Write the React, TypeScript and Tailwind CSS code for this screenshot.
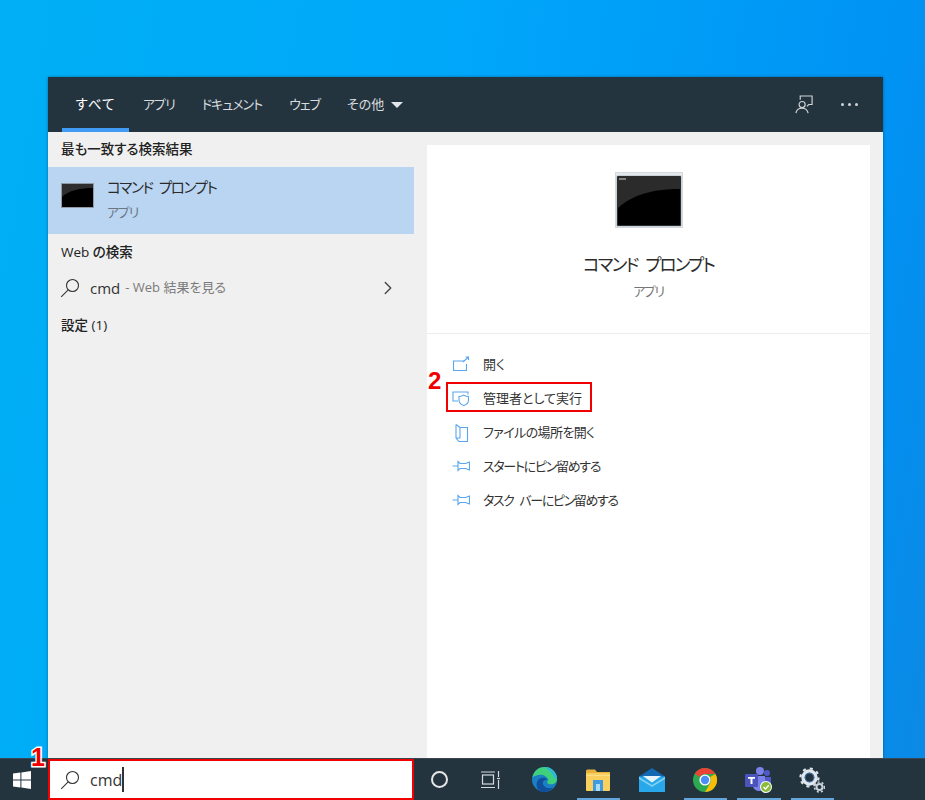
import { ChevronRight } from "lucide-react";

const cjk = "font-['Open_Sans','Noto_Sans_CJK_JP',sans-serif] [font-feature-settings:'palt']";

function SearchIcon({ className }: { className?: string }) {
  return (
    <svg viewBox="0 0 20 20" className={className} fill="none" stroke="currentColor" strokeWidth="1.1">
      <circle cx="12.5" cy="7.5" r="6" />
      <path d="M8.2 11.8 L1.2 18.8" />
    </svg>
  );
}

function CmdIcon({ big }: { big?: boolean }) {
  if (big) {
    return (
      <svg viewBox="0 0 68 56" className="w-[68px] h-[56px]">
        <rect x="0.5" y="0.5" width="67" height="55" fill="#e6e9ec" stroke="#d5d8dc" />
        <rect x="2" y="4" width="64" height="50" fill="#000" stroke="#8a9aa8" strokeWidth="0.6" />
        <path d="M3 4.5 H65 V17 C40 17 18 22 3 36 Z" fill="#2b2b2b" />
        <path d="M4 7 H11" stroke="#bbb" strokeWidth="1.2" />
      </svg>
    );
  }
  return (
    <svg viewBox="0 0 33 25" className="w-[33px] h-[25px]">
      <rect x="0" y="0" width="33" height="25" fill="#8f9aa5" />
      <rect x="1" y="1" width="31" height="23" fill="#000" />
      <path d="M1 1 H32 V5 C20 5 8 7 1 14 Z" fill="#2e2e2e" />
    </svg>
  );
}

function ActionIcon({ kind }: { kind: string }) {
  const common = { fill: "none", stroke: "#5aa6ee", strokeWidth: 1.1 };
  return (
    <svg viewBox="0 0 18 18" className="w-[18px] h-[18px] shrink-0" {...common}>
      {kind === "open" && (
        <>
          <path d="M12 5 H1.5 V14.5 H14.5 V8" />
          <path d="M11 6 L16.5 1 M13.5 1 H16.5 V4" />
        </>
      )}
      {kind === "admin" && (
        <>
          <path d="M6 11 H1 V2 H16 V4.5" />
          <path d="M7 6.5 C9.5 6.5 10.5 5.5 11.5 5 C12.5 5.5 14 6.5 16.5 6.5 V10 C16.5 13 14 14.8 11.8 15.5 C9.5 14.8 7 13 7 10 Z" />
        </>
      )}
      {kind === "folder" && (
        <path d="M4 0.5 V14 L7 17.5 H15.5 V3.5 H8 V14 H4 M4 0.5 L8 3.5" />
      )}
      {kind === "pin" && (
        <path d="M0.5 8 H6 M6 3.5 L8 5.5 H13.5 L17.5 4 V12 L13.5 10.5 H8 L6 12.5 Z" />
      )}
    </svg>
  );
}

function StartLogo() {
  return (
    <svg viewBox="0 0 18 18" className="w-[18px] h-[18px]" fill="#fff">
      <path d="M0 2.6 L7.4 1.6 V8.4 H0 Z" />
      <path d="M8.4 1.4 L18 0 V8.4 H8.4 Z" />
      <path d="M0 9.6 H7.4 V16.4 L0 15.4 Z" />
      <path d="M8.4 9.6 H18 V18 L8.4 16.6 Z" />
    </svg>
  );
}

function TaskView() {
  return (
    <svg viewBox="0 0 20 18" className="w-[20px] h-[18px]" fill="none" stroke="#d6d9dc" strokeWidth="1.2">
      <rect x="1.5" y="4" width="11" height="9" />
      <path d="M0 1 H14 M0 16.5 H14 M17.5 0 V6 M17.5 9 V18" />
      <path d="M16 7.5 H19" />
    </svg>
  );
}

function EdgeIcon() {
  return (
    <svg viewBox="0 0 28 28" className="w-[27px] h-[27px]">
      <circle cx="14" cy="14" r="13" fill="#1a7fc4" />
      <path d="M1.5 12 C3 4 9 1 14 1 C21 1 27 6 27 14 C27 17 24 19 21 19 C17 19 15.5 16.5 18 14.5 C16 9 8 7 1.5 12 Z" fill="#3fd07c" />
      <path d="M14 1 C21 1 27 6 27 14 L24 12 C22 7 18 4 14 1 Z" fill="#2fb7d8" />
      <path d="M12 27 C7 26 4 20 7 15 C9 12 14 11 17 14 C13 14 11 17 13 20 C15 23 19 24 23 22 C20 26 16 27.5 12 27 Z" fill="#0f4f9c" />
    </svg>
  );
}

function FolderIcon() {
  return (
    <svg viewBox="0 0 24 22" className="w-[24px] h-[22px]">
      <path d="M0 2 C0 1 1 0.5 2 0.5 H9 L11 3 H24 V6 H0 Z" fill="#e8b23a" />
      <rect x="0" y="4" width="24" height="18" rx="1" fill="#f9cf5e" />
      <path d="M0 6 H24 V7 H0 Z" fill="#fbe08c" />
      <path d="M7 11 H17 V22 H14 V15 H10 V22 H7 Z" fill="#3f9be0" />
      <rect x="10" y="15" width="4" height="7" fill="#a9dcf7" />
    </svg>
  );
}

function MailIcon() {
  return (
    <svg viewBox="0 0 26 24" className="w-[26px] h-[24px]">
      <path d="M13 0 L26 8.5 V10 H0 V8.5 Z" fill="#1268b3" />
      <rect x="0" y="8.5" width="26" height="15.5" fill="#28a8ea" />
      <path d="M4 8 H22 L13 14.5 Z" fill="#e8f4fb" />
      <path d="M0 9 L13 17 L26 9 V11 L13 19 L0 11 Z" fill="#7fd0f5" />
    </svg>
  );
}

function ChromeIcon() {
  return (
    <svg viewBox="0 0 24 24" className="w-[24px] h-[24px]">
      <circle cx="12" cy="12" r="12" fill="#2da94f" />
      <path d="M12 0 A12 12 0 0 1 22.4 6 H12 A6 6 0 0 0 6.8 9 L1.8 5.7 A12 12 0 0 1 12 0 Z" fill="#ea4335" />
      <path d="M22.4 6 A12 12 0 0 1 12 24 L17.2 15 A6 6 0 0 0 17.2 9 Z" fill="#fbbc05" />
      <circle cx="12" cy="12" r="5.6" fill="#fff" />
      <circle cx="12" cy="12" r="4.2" fill="#4d8df5" />
    </svg>
  );
}

function TeamsIcon() {
  return (
    <svg viewBox="0 0 28 28" className="w-[28px] h-[28px]">
      <circle cx="15" cy="5" r="4" fill="#7b83eb" />
      <circle cx="22" cy="7" r="3" fill="#5059c9" />
      <path d="M17 11 H26 V18 C26 21 23 22 21 22 H17 Z" fill="#5059c9" />
      <path d="M8 10 H20 V20 C20 24 16 25 14 25 C11 25 9 23 8 21 Z" fill="#7b83eb" />
      <rect x="0" y="8" width="13" height="13" rx="1" fill="#4b53bc" />
      <path d="M3 11 H10 V12.8 H7.5 V18 H5.5 V12.8 H3 Z" fill="#fff" />
      <circle cx="21" cy="21" r="6" fill="#fff" />
      <circle cx="21" cy="21" r="5" fill="#8dbb3c" />
      <path d="M18.5 21 L20.5 23 L23.8 19.3" fill="none" stroke="#fff" strokeWidth="1.3" />
    </svg>
  );
}

function GearsIcon() {
  return (
    <svg viewBox="0 0 26 26" className="w-[26px] h-[26px]" fill="none">
      <circle cx="10.5" cy="10.5" r="6.5" stroke="#dfe6ec" strokeWidth="3.4" />
      <circle cx="10.5" cy="10.5" r="9" stroke="#dfe6ec" strokeWidth="2.2" strokeDasharray="3 4.07" />
      <circle cx="10.5" cy="10.5" r="4.4" stroke="#3e78b8" strokeWidth="1" />
      <circle cx="20.5" cy="20" r="3" stroke="#c9d2da" strokeWidth="2" />
      <circle cx="20.5" cy="20" r="5" stroke="#c9d2da" strokeWidth="1.6" strokeDasharray="2 2.2" />
    </svg>
  );
}

function TaskButton({ children, active }: { children: React.ReactNode; active?: boolean }) {
  return (
    <div className="relative w-[53.5px] h-full flex items-center justify-center">
      {children}
      {active && <div className="absolute bottom-0 left-[5px] right-[5px] h-[2px] bg-[#62a6dc]" />}
    </div>
  );
}

const tabs = ["アプリ", "ドキュメント", "ウェブ"];

const actions = [
  { kind: "open", label: "開く", tracking: "" },
  { kind: "admin", label: "管理者として実行", tracking: "", boxed: true },
  { kind: "folder", label: "ファイルの場所を開く", tracking: "tracking-[-0.6px]" },
  { kind: "pin", label: "スタートにピン留めする", tracking: "tracking-[-1.3px]" },
  { kind: "pin", label: "タスク バーにピン留めする", tracking: "tracking-[-1.4px] [word-spacing:4px]" },
];

export default function App() {
  return (
    <div className={`relative w-[925px] h-[800px] overflow-hidden flex flex-col ${cjk} bg-[linear-gradient(100deg,#00aff5_0%,#00a8fa_42%,#0093f4_85%,#0c88e4_100%)]`}>
      <div className="flex-1 min-h-0 pt-[77px] pl-[48px]">
        <div className="w-[835px] h-full flex flex-col shadow-[0_0_3px_rgba(0,0,0,0.35)]">
          <header className="h-[55px] shrink-0 bg-[#24343f] flex items-stretch text-[13px] text-[#e3e6e8] pl-[14px] pr-[25px]">
            <div className="relative w-[67px] flex items-center justify-center text-white text-[13.5px] tracking-[1px]">
              すべて
              <div className="absolute bottom-0 inset-x-0 h-[4px] bg-[#3f9bf4]" />
            </div>
            <div className="flex items-center gap-[27px] pl-[14px] text-[#d8dcdf]">
              {tabs.map((t) => (
                <span key={t} className="tracking-[-1px]">{t}</span>
              ))}
              <span className="flex items-center gap-[7px]">
                その他
                <span className="w-0 h-0 border-x-[6px] border-x-transparent border-t-[6px] border-t-[#e3e6e8]" />
              </span>
            </div>
            <div className="ml-auto flex items-center gap-[27px]">
              <svg viewBox="0 0 20 20" className="w-[19px] h-[19px]" fill="none" stroke="#d0d4d8" strokeWidth="1.2">
                <path d="M5.5 5 V1 H18 V10 H14.5 L12.5 12" />
                <circle cx="7.5" cy="10" r="3.2" />
                <path d="M1 19 C1.5 15.5 4 14 7.5 14 C11 14 13 15.5 13.8 19" />
              </svg>
              <div className="flex gap-[4px]">
                <span className="w-[3px] h-[3px] rounded-full bg-[#d0d4d8]" />
                <span className="w-[3px] h-[3px] rounded-full bg-[#d0d4d8]" />
                <span className="w-[3px] h-[3px] rounded-full bg-[#d0d4d8]" />
              </div>
            </div>
          </header>

          <div className="flex-1 min-h-0 flex">
            <aside className="w-[366px] shrink-0 bg-[#f0f0f0] text-[#1d1d1d]">
              <div className="h-[35px] pl-[13px] flex items-center text-[13.5px] font-medium text-[#222]">最も一致する検索結果</div>
              <div className="h-[67px] bg-[#b9d5f2] pl-[13px] flex items-start gap-[13px]">
                <div className="mt-[16px]">
                  <CmdIcon />
                </div>
                <div className="mt-[9px]">
                  <div className="text-[14.5px] tracking-[-1.4px] [word-spacing:4px] leading-[24px] text-[#2a2a2a]">コマンド プロンプト</div>
                  <div className="text-[13px] tracking-[-1.2px] leading-[24px] text-[#6c7680]">アプリ</div>
                </div>
              </div>
              <div className="h-[36px] pl-[13px] flex items-center text-[13.5px] font-medium text-[#222]">Web の検索</div>
              <div className="h-[36px] pl-[12px] pr-[15px] flex items-center text-[13px]">
                <SearchIcon className="w-[20px] h-[20px] text-[#333]" />
                <span className="ml-[10px] text-[15px] text-[#333]">cmd</span>
                <span className="ml-[5px] text-[#7a7a7a]">- Web 結果を見る</span>
                <ChevronRight className="ml-auto w-[22px] h-[22px] text-[#444]" strokeWidth={1.5} />
              </div>
              <div className="h-[38px] pl-[13px] flex items-center text-[13.5px] font-medium text-[#222]">設定 (1)</div>
            </aside>

            <main className="flex-1 bg-[#f0f0f0] pt-[13px] pl-[13px] pr-[13px]">
              <div className="h-full bg-white">
                <div className="h-[189px] flex flex-col items-center border-b border-[#ececec] pt-[27px]">
                  <CmdIcon big />
                  <div className="mt-[23px] text-[17.5px] tracking-[-1.8px] [word-spacing:5px] leading-[26px] text-[#2b2b2b]">コマンド プロンプト</div>
                  <div className="mt-[4px] text-[13px] tracking-[-1.3px] leading-[20px] text-[#757575]">アプリ</div>
                </div>
                <ul className="pt-[14px] pl-[25px]">
                  {actions.map((a) => (
                    <li key={a.label} className={`relative h-[34px] flex items-center gap-[13px] text-[13px] text-[#333] ${a.tracking}`}>
                      <ActionIcon kind={a.kind} />
                      <span>{a.label}</span>
                      {a.boxed && (
                        <div className="absolute left-[-6px] top-0 w-[146px] h-[30px] border-2 border-[#f00000]" />
                      )}
                    </li>
                  ))}
                </ul>
              </div>
            </main>
          </div>
        </div>
      </div>

      <footer className="h-[42px] shrink-0 bg-[#24343f] flex items-stretch border-t border-[#3a4650]">
        <div className="w-[48px] pr-[4px] flex items-center justify-center">
          <StartLogo />
        </div>
        <div className="w-[366px] bg-white border-2 border-[#f00000] flex items-center pl-[10px] text-[#333]">
          <SearchIcon className="w-[20px] h-[20px] text-[#333]" />
          <span className="ml-[10px] text-[16px]">cmd</span>
          <span className="w-[1.5px] h-[25px] bg-[#333]" />
        </div>
        <div className="w-[51px] flex items-center justify-center">
          <div className="w-[17px] h-[17px] rounded-full border-[2.5px] border-[#e6e6e6]" />
        </div>
        <div className="w-[53px] -ml-[1px] flex items-center justify-center">
          <TaskView />
        </div>
        <div className="flex items-stretch pl-[1px]">
          <TaskButton><EdgeIcon /></TaskButton>
          <TaskButton active><FolderIcon /></TaskButton>
          <TaskButton><MailIcon /></TaskButton>
          <TaskButton active><ChromeIcon /></TaskButton>
          <TaskButton active><TeamsIcon /></TaskButton>
          <TaskButton active><GearsIcon /></TaskButton>
        </div>
      </footer>

      <span className="absolute left-[31px] top-[741px] text-[25px] leading-[32px] font-bold text-[#f00000] font-['Liberation_Sans',sans-serif] [-webkit-text-stroke:3px_white] [paint-order:stroke_fill]">1</span>
      <span className="absolute left-[428px] top-[366px] text-[24px] leading-[30px] font-bold text-[#f00000] font-['Liberation_Sans',sans-serif]">2</span>
    </div>
  );
}
